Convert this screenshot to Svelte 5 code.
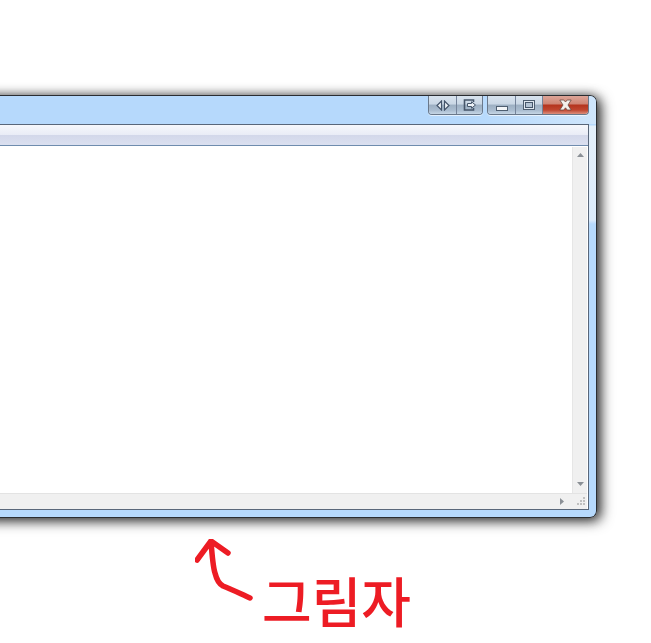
<script lang="ts">
  const captionButtons = [
    { name: "restore-tabs", width: 28 },
    { name: "detach", width: 25 },
  ];
</script>

<main class="page">
  <section class="window">
    <header class="titlebar">
      <div class="caption-group tools">
        {#each captionButtons as btn}
          <button class="caption" style="width: {btn.width}px" aria-label={btn.name}>
            {#if btn.name === "restore-tabs"}
              <svg width="14" height="11" viewBox="0 0 14 11">
                <path d="M5.500 1v9L1 5.500z" fill="#eef3f8" stroke="#44546a" stroke-width="1.200" />
                <path d="M8.500 1v9L13 5.500z" fill="#eef3f8" stroke="#44546a" stroke-width="1.200" />
              </svg>
            {:else}
              <svg width="14" height="12" viewBox="0 0 14 12">
                <path d="M10.500 3V1h-9v10h9V9" fill="none" stroke="#46566a" stroke-width="1.600" />
                <path d="M4.500 4.500h4V2.800L12.500 6 8.500 9.200V7.500h-4z" fill="#eef3f8" stroke="#46566a" />
              </svg>
            {/if}
          </button>
        {/each}
      </div>
      <div class="caption-group controls">
        <button class="caption min" aria-label="minimize"><span></span></button>
        <button class="caption max" aria-label="maximize"><span></span></button>
        <button class="caption close" aria-label="close">
          <svg width="13" height="12" viewBox="0 0 13 12">
            <path d="M.8 1h4l1.700 2 1.700-2h4L9 6l3.200 5h-4L6.500 8.800 4.800 11h-4L4 6z" fill="#f3efec" stroke="#6b4a42" stroke-width=".8" />
          </svg>
        </button>
      </div>
    </header>

    <div class="inner">
      <div class="toolbar"></div>
      <div class="client">
        <div class="body">
          <div class="doc"></div>
          <div class="vscroll">
            <svg class="arrow" width="7" height="4" viewBox="0 0 7 4"><path d="M3.500 0l3.500 4H0z" /></svg>
            <svg class="arrow" width="7" height="4" viewBox="0 0 7 4"><path d="M0 0h7L3.500 4z" /></svg>
          </div>
        </div>
        <div class="hscroll">
          <svg class="arrow" width="4" height="7" viewBox="0 0 4 7"><path d="M0 0l4 3.500L0 7z" /></svg>
          <div class="grip">
            <svg width="11" height="11" viewBox="0 0 11 11">
              <path d="M8 1h2v2H8zM5 4h2v2H5zM8 4h2v2H8zM2 7h2v2H2zM5 7h2v2H5zM8 7h2v2H8z" fill="#c0c0c0" />
            </svg>
          </div>
        </div>
      </div>
    </div>
  </section>

  <section class="note">
    <svg class="pointer" width="60" height="66" viewBox="0 0 60 66">
      <path d="M2 21 L16 2 L33 14 M16 2 C17 16 18 28 20 34 C22 42 24 45 28 47 C36 50 46 55 55 59" fill="none" stroke="#ed1c24" stroke-width="5.500" stroke-linecap="round" stroke-linejoin="round" />
    </svg>
    <span class="label">그림자</span>
  </section>
</main>

<style>
  :global(body) {
    background: #fff;
    overflow: hidden;
  }

  .page {
    width: 651px;
    height: 643px;
    padding-top: 95px;
    box-sizing: border-box;
    overflow: hidden;
  }

  .window {
    width: 617px;
    height: 423px;
    margin-left: -20px;
    box-sizing: border-box;
    display: flex;
    flex-direction: column;
    background: linear-gradient(#b6d9fc 0, #b6d9fc 29px, #e4f0fb 30px, #dcebfa 124px, #b6d9fc 128px);
    border: 1px solid #2a2d31;
    border-left: 0;
    border-radius: 0 7px 7px 0;
    box-shadow:
      4px 3px 13px rgba(0, 0, 0, 0.75),
      0 0 11px rgba(0, 0, 0, 0.4);
    padding: 0 7px 7px 0;
  }

  .titlebar {
    height: 28px;
    flex: none;
    display: flex;
    justify-content: flex-end;
    align-items: flex-start;
    gap: 4px;
    background: linear-gradient(90deg, #b6d9fc 80%, #cfe6fc 100%);
    margin-right: -7px;
    padding-right: 7px;
    border-radius: 0 6px 0 0;
  }

  .caption-group {
    display: flex;
    height: 19px;
    border: 1px solid #6a788a;
    border-top: 0;
    border-radius: 0 0 4px 4px;
    overflow: hidden;
    box-sizing: border-box;
    box-shadow: 0 1px 0 rgba(255, 255, 255, 0.6);
  }

  .caption {
    height: 100%;
    padding: 0;
    border: 0;
    border-right: 1px solid #75849a;
    background: linear-gradient(#d8e3ee 0, #cad7e5 45%, #9cafc2 50%, #abbdd0 80%, #c6d6e5 100%);
    display: flex;
    align-items: center;
    justify-content: center;
  }

  .caption:last-child {
    border-right: 0;
  }

  .min {
    width: 28px;
  }

  .min span {
    width: 10px;
    height: 3px;
    margin-top: 6px;
    background: #f2f5f8;
    border: 1px solid #4e5e70;
  }

  .max {
    width: 27px;
  }

  .max span {
    width: 6px;
    height: 4px;
    border: 1px solid #46566a;
    box-shadow:
      0 0 0 1px #dfe7ef,
      0 0 0 2px #4e5e70;
    background: #b4c4d4;
  }

  .close {
    width: 45px;
    background: linear-gradient(#dda598 0, #d08676 42%, #b5351f 52%, #c04630 78%, #dc8f7e 100%);
  }

  .inner {
    flex: 1;
    display: flex;
    flex-direction: column;
    border: 1px solid #59677a;
    border-left: 0;
    background: #fff;
    min-height: 0;
  }

  .toolbar {
    height: 20px;
    flex: none;
    background: linear-gradient(#f6f8fc 0, #e9ecf6 50%, #d3d8ea 52%, #dbe0f0 100%);
    border-bottom: 1px solid #6f8cae;
  }

  .client {
    flex: 1;
    display: flex;
    flex-direction: column;
    min-height: 0;
    border-top: 1px solid #fff;
    border-right: 1px solid #fff;
  }

  .body {
    flex: 1;
    display: flex;
    min-height: 0;
  }

  .doc {
    flex: 1;
    background: #fff;
  }

  .vscroll {
    width: 15px;
    flex: none;
    background: #f0f0f0;
    border-left: 1px solid #e6e6e6;
    display: flex;
    flex-direction: column;
    justify-content: space-between;
    align-items: center;
    padding: 6px 0 7px;
    box-sizing: border-box;
  }

  .hscroll {
    height: 16px;
    flex: none;
    background: #f0f0f0;
    border-top: 1px solid #e3e3e3;
    display: flex;
    justify-content: flex-end;
    align-items: center;
    box-sizing: border-box;
  }

  .arrow path {
    fill: #8b9096;
  }

  .grip {
    width: 23px;
    display: flex;
    justify-content: flex-end;
    padding-right: 1px;
    box-sizing: border-box;
  }

  .note {
    position: relative;
    height: 125px;
  }

  .pointer {
    position: absolute;
    left: 195px;
    top: 21px;
  }

  .label {
    position: absolute;
    left: 262px;
    top: 50px;
    font-family: "Noto Sans CJK KR", sans-serif;
    font-size: 54px;
    line-height: 64px;
    font-weight: 500;
    color: #ed1c24;
    white-space: nowrap;
  }
</style>
